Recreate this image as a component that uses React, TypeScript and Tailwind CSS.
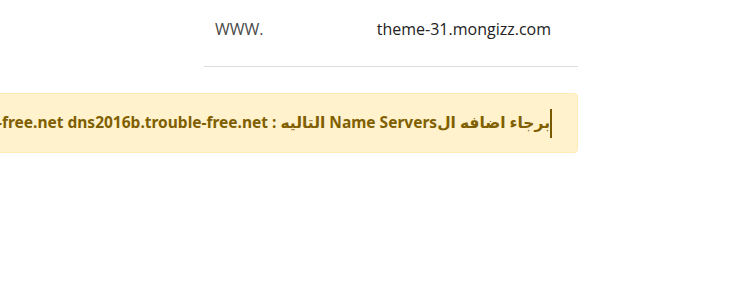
export default function App() {
  return (
    <div className="min-h-screen bg-white overflow-hidden">
      <div className="ml-[204px] w-[374px]">
        <div className="flex items-center justify-between pl-[11px] pr-[27px] pt-[17px] pb-[25px] border-b border-[#dcdcdc] font-['Open_Sans',sans-serif] text-[16px] leading-[24px]">
          <span className="text-[#4a4a4a]">WWW.</span>
          <span className="text-[#222]">theme-31.mongizz.com</span>
        </div>
        <div dir="rtl">
          <div className="mt-[26px] h-[60px] w-max min-w-full flex items-center pr-[25px] pl-[20px] bg-[#fff2cc] border border-[#ffecb5] rounded-[4px] whitespace-nowrap text-[#7f5f00] font-bold text-[15.5px] font-['Noto_Sans','DejaVu_Sans',sans-serif]">
            <span className="inline-block w-[2px] h-[29px] bg-[#7a5a00] shrink-0"></span>
            <span className="shrink-0">
              برجاء اضافه الName Servers التاليه : dns2016a.trouble-free.net dns2016b.trouble-free.net
            </span>
          </div>
        </div>
      </div>
    </div>
  );
}
